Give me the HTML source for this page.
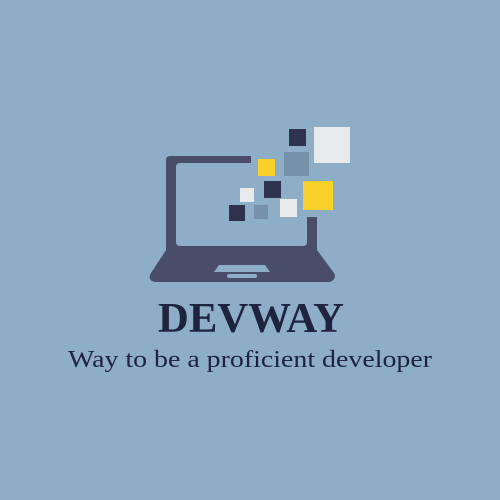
<!DOCTYPE html>
<html><head><style>html,body{margin:0;padding:0;background:#8eadc6;}svg{display:block}</style></head>
<body>
<svg width="500" height="500" viewBox="0 0 500 500" xmlns="http://www.w3.org/2000/svg">
<rect width="500" height="500" fill="#8eadc6"/>
<!-- laptop screen frame -->
<path fill-rule="evenodd" fill="#4a4d6a" d="M170,156 H251 V163 H180 Q176,163 176,167 V242 Q176,246 180,246 H303 Q307,246 307,242 V217 H317 V252 H166 V160 Q166,156 170,156 Z"/>
<!-- base -->
<path fill="#4a4d6a" d="M166,250 H317 L334,273 Q336,276 334,279 Q332,282 328,282 H156 Q152,282 150,279 Q149,276 151,273 Z"/>
<path fill="#8eadc6" d="M219,265 H265 L270,272 H214 Z"/>
<rect x="227" y="274" width="30" height="4" rx="2" fill="#8eadc6"/>
<!-- squares -->
<rect x="289" y="129" width="17" height="17" fill="#30334f"/>
<rect x="314" y="127" width="36" height="36" fill="#e9eaec"/>
<rect x="284" y="152" width="25" height="24" fill="#7592aa"/>
<rect x="258" y="159" width="17" height="17" fill="#f9d12a"/>
<rect x="264" y="181" width="17" height="17" fill="#30334f"/>
<rect x="303" y="181" width="30" height="29" fill="#f9d12a"/>
<rect x="240" y="188" width="14" height="14" fill="#e9eaec"/>
<rect x="280" y="199" width="17" height="18" fill="#e9eaec"/>
<rect x="254" y="205" width="14" height="14" fill="#7592aa"/>
<rect x="229" y="205" width="16" height="16" fill="#30334f"/>
<text x="251" y="332" text-anchor="middle" font-family="Liberation Serif, serif" font-weight="bold" font-size="42" fill="#1e2440" textLength="186" lengthAdjust="spacingAndGlyphs">DEVWAY</text>
<text x="250" y="367" text-anchor="middle" font-family="Liberation Serif, serif" font-size="24" fill="#1e2440" textLength="364" lengthAdjust="spacingAndGlyphs">Way to be a proficient developer</text>
</svg>
</body></html>
